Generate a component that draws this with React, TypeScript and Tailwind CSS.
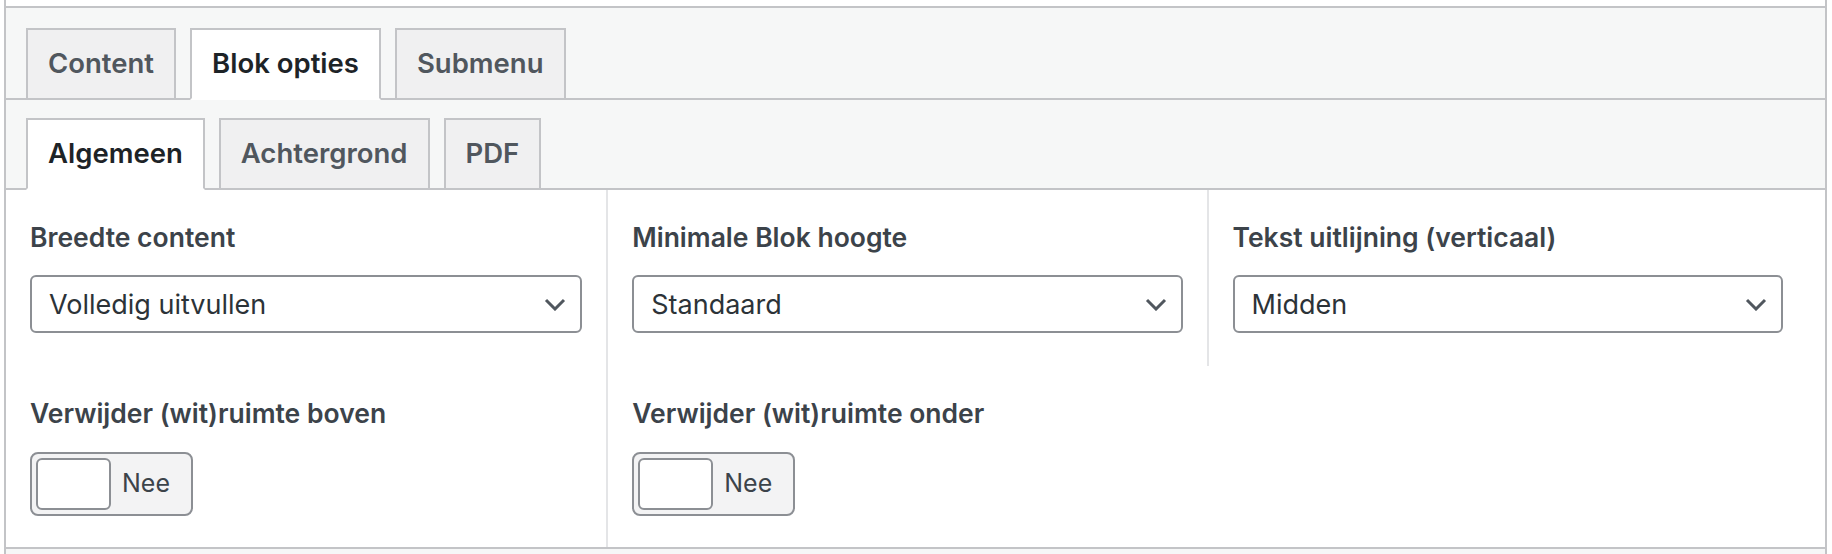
import React from 'react'

const mainTabs = ['Content', 'Blok opties', 'Submenu']
const subTabs = ['Algemeen', 'Achtergrond', 'PDF']

function TabBar({
  tabs,
  active,
  className
}: {
  tabs: string[]
  active: string
  className: string
}) {
  return (
    <div
      className={`flex items-end gap-[14px] border-b-2 border-[#c3c4c7] bg-[#f6f7f7] px-5 ${className}`}
    >
      {tabs.map((tab) => (
        <div
          key={tab}
          className={`-mb-[2px] flex h-[72px] items-center border-2 border-[#c3c4c7] px-5 text-[27.5px] font-semibold ${
            tab === active
              ? 'border-b-white bg-white text-[#1d2327]'
              : 'bg-[#f0f0f1] text-[#50575e]'
          }`}
        >
          {tab}
        </div>
      ))}
    </div>
  )
}

function Chevron() {
  return (
    <svg width="22" height="13" viewBox="0 0 22 13" fill="none">
      <polyline
        points="2,2 11,11 20,2"
        stroke="#50575e"
        strokeWidth="3"
        strokeLinejoin="miter"
      />
    </svg>
  )
}

function SelectField({ label, value, border }: { label: string; value: string; border?: boolean }) {
  return (
    <div
      className={`w-[33%] px-6 pt-[30px] pb-[33px] ${border ? 'border-l-2 border-[#e4e5e7]' : ''}`}
    >
      <div className="h-[34px] text-[26.5px] leading-[34px] font-semibold text-[#3c434a]">{label}</div>
      <div className="mt-[21px] flex h-[58px] items-center justify-between rounded-[6px] border-2 border-[#8c8f94] bg-white pr-[14px] pl-[17px] text-[27px] leading-[36px] text-[#2c3338]">
        <span className="pt-[2px]">{value}</span>
        <Chevron />
      </div>
    </div>
  )
}

function ToggleField({ label, border }: { label: string; border?: boolean }) {
  return (
    <div
      className={`w-[33%] px-6 pt-[30px] pb-[31px] ${border ? 'border-l-2 border-[#e4e5e7]' : ''}`}
    >
      <div className="h-[34px] text-[26.5px] leading-[34px] font-semibold text-[#3c434a]">{label}</div>
      <div className="mt-[22px] flex h-[64px] w-[163px] items-center gap-[11px] rounded-[8px] border-2 border-[#8c8f94] bg-[#f3f3f4] pl-[4px]">
        <div className="h-[52px] w-[75px] rounded-[6px] border-2 border-[#8c8f94] bg-white" />
        <span className="text-[25px] text-[#3c434a]">Nee</span>
      </div>
    </div>
  )
}

export default function App() {
  return (
    <div className="h-[554px] bg-white pr-[5px] pl-1 font-[family-name:Inter,'Liberation_Sans',sans-serif]">
      <div className="flex h-full flex-col border-x-2 border-[#c3c4c7] pt-[6px]">
        <TabBar tabs={mainTabs} active="Blok opties" className="border-t-2 pt-5" />
        <TabBar tabs={subTabs} active="Algemeen" className="pt-[18px]" />
        <div className="flex flex-wrap border-b-2 border-[#c3c4c7] bg-white">
          <SelectField label="Breedte content" value="Volledig uitvullen" />
          <SelectField label="Minimale Blok hoogte" value="Standaard" border />
          <SelectField label="Tekst uitlijning (verticaal)" value="Midden" border />
          <ToggleField label="Verwijder (wit)ruimte boven" />
          <ToggleField label="Verwijder (wit)ruimte onder" border />
        </div>
        <div className="flex-1 bg-[#f6f7f7]" />
      </div>
    </div>
  )
}
